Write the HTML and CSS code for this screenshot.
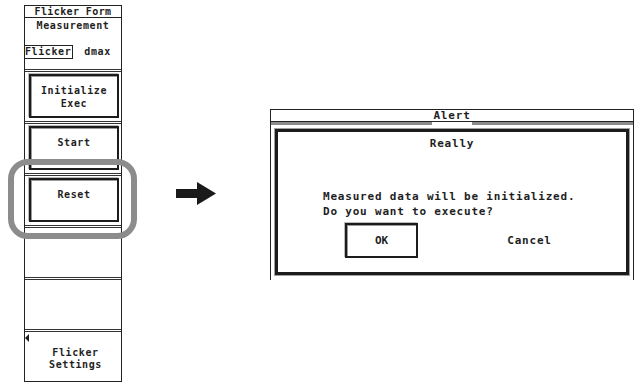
FILE: index.html
```html
<!DOCTYPE html>
<html>
<head>
<meta name="viewport" content="width=device-width, initial-scale=1">
<link rel="stylesheet" href="styles.css">
</head>
<body>

<div class="sheet">

  <!-- soft key menu -->
  <div class="menu">
    <div class="menu-title">_Flicker Form_</div>

    <div class="menu-meas">
      <div class="meas-label">Measurement</div>
      <div class="meas-choice">
        <span class="choice-on">Flicker</span>
        <span class="choice-off">dmax</span>
      </div>
    </div>

    <div class="menu-key">
      <div class="key-btn">Initialize<br>Exec</div>
    </div>
    <div class="menu-key">
      <div class="key-btn">Start</div>
    </div>
    <div class="menu-key">
      <div class="key-btn">Reset</div>
    </div>
    <div class="menu-key"></div>
    <div class="menu-key"></div>
    <div class="menu-key menu-sub">
      <span class="sub-mark"></span>
      <div class="sub-text">Flicker<br>Settings</div>
    </div>

    <div class="ring"></div>
  </div>

  <svg class="arrow" width="40" height="23" viewBox="0 0 40 23">
    <path d="M0 7 H21 V0 L40 11.5 L21 23 V16 H0 Z" fill="#1a1a1a"/>
  </svg>

  <!-- alert dialog -->
  <div class="dialog">
    <div class="dialog-title">
      <span class="title-fill"></span>
      <span class="title-text">Alert</span>
      <span class="title-fill"></span>
    </div>
    <div class="dialog-body">
      <div class="body-head">Really</div>
      <div class="body-msg">Measured data will be initialized.<br>Do you want to execute?</div>
      <div class="body-btns">
        <div class="dlg-btn dlg-btn-on">OK</div>
        <div class="dlg-btn">Cancel</div>
      </div>
    </div>
  </div>

</div>

</body>
</html>
```

FILE: styles.css
```css
body {
  margin: 0;
  background: #fff;
  color: #1f1f1f;
  font-family: "DejaVu Sans Mono", "Liberation Mono", monospace;
  font-weight: bold;
}

.sheet {
  display: flex;
  align-items: flex-start;
}

/* Soft key menu */
.menu {
  position: relative;
  margin: 5px 0 0 24px;
  width: 98px;
  box-sizing: border-box;
  border: 1px solid #222;
  font-size: 10px;
  letter-spacing: 0.6px;
}

.menu-title {
  height: 12px;
  line-height: 11px;
  box-sizing: border-box;
  border-bottom: 1px solid #222;
  text-align: center;
  white-space: nowrap;
  letter-spacing: 0.4px;
}

.menu-meas {
  height: 51px;
}

.meas-label {
  padding-top: 1px;
  line-height: 13px;
  text-align: center;
}

.meas-choice {
  display: flex;
  align-items: center;
  margin-top: 13px;
  margin-left: -1px;
  line-height: 12px;
}

.choice-on {
  border: 1px solid #222;
  padding: 0 1px 0 0;
}

.choice-off {
  margin-left: 11px;
}

.menu-key {
  height: 52px;
  box-sizing: border-box;
  border-top: 3px double #333;
  padding: 2px 2px 3px 4px;
}

.key-btn {
  height: 44px;
  box-sizing: border-box;
  border: 2px solid #1c1c1c;
  box-shadow: inset 1px 1px 0 #9a9a9a, -1px -1px 0 #bbb;
  padding-top: 8px;
  line-height: 13px;
  text-align: center;
}

.menu-sub {
  position: relative;
}

.sub-mark {
  position: absolute;
  left: 0;
  top: 2px;
  width: 0;
  height: 0;
  border-top: 4px solid transparent;
  border-bottom: 4px solid transparent;
  border-right: 4px solid #1c1c1c;
}

.sub-text {
  padding-top: 13px;
  padding-left: 3px;
  line-height: 12px;
  text-align: center;
}

.ring {
  position: absolute;
  left: -17px;
  top: 153px;
  width: 129px;
  height: 80px;
  box-sizing: border-box;
  border: 6px solid #8c8c8c;
  border-radius: 20px;
}

.arrow {
  margin: 182px 0 0 54px;
}

/* Alert dialog */
.dialog {
  margin: 109px 0 0 54px;
  width: 364px;
  height: 171px;
  box-sizing: border-box;
  border: 1px solid #222;
  border-bottom: none;
  font-size: 11px;
  letter-spacing: 0.8px;
}

.dialog-title {
  display: flex;
  align-items: flex-end;
  height: 15px;
}

.title-fill {
  flex: 1;
  height: 3px;
  border-top: 1px solid #222;
  background: #8c8c8c;
}

.title-text {
  line-height: 11px;
  border-bottom: 1px solid #222;
  margin-bottom: 3px;
  padding: 0 1px;
}

.dialog-body {
  margin: 4px 4px 0 4px;
  height: 146px;
  box-sizing: border-box;
  border: 3px solid #1c1c1c;
  box-shadow: 0 0 0 1px #a0a0a0;
}

.body-head {
  margin-top: 5px;
  line-height: 14px;
  text-align: center;
}

.body-msg {
  margin: 38px 0 0 45px;
  line-height: 15px;
}

.body-btns {
  display: flex;
  gap: 75px;
  margin: 4px 0 0 67px;
}

.dlg-btn {
  width: 73px;
  height: 35px;
  box-sizing: border-box;
  display: flex;
  align-items: center;
  justify-content: center;
  border: 2px solid transparent;
}

.dlg-btn-on {
  border-color: #1c1c1c;
  box-shadow: inset 1px 1px 0 #9a9a9a, -1px -1px 0 #bbb;
  letter-spacing: 0;
}
```
